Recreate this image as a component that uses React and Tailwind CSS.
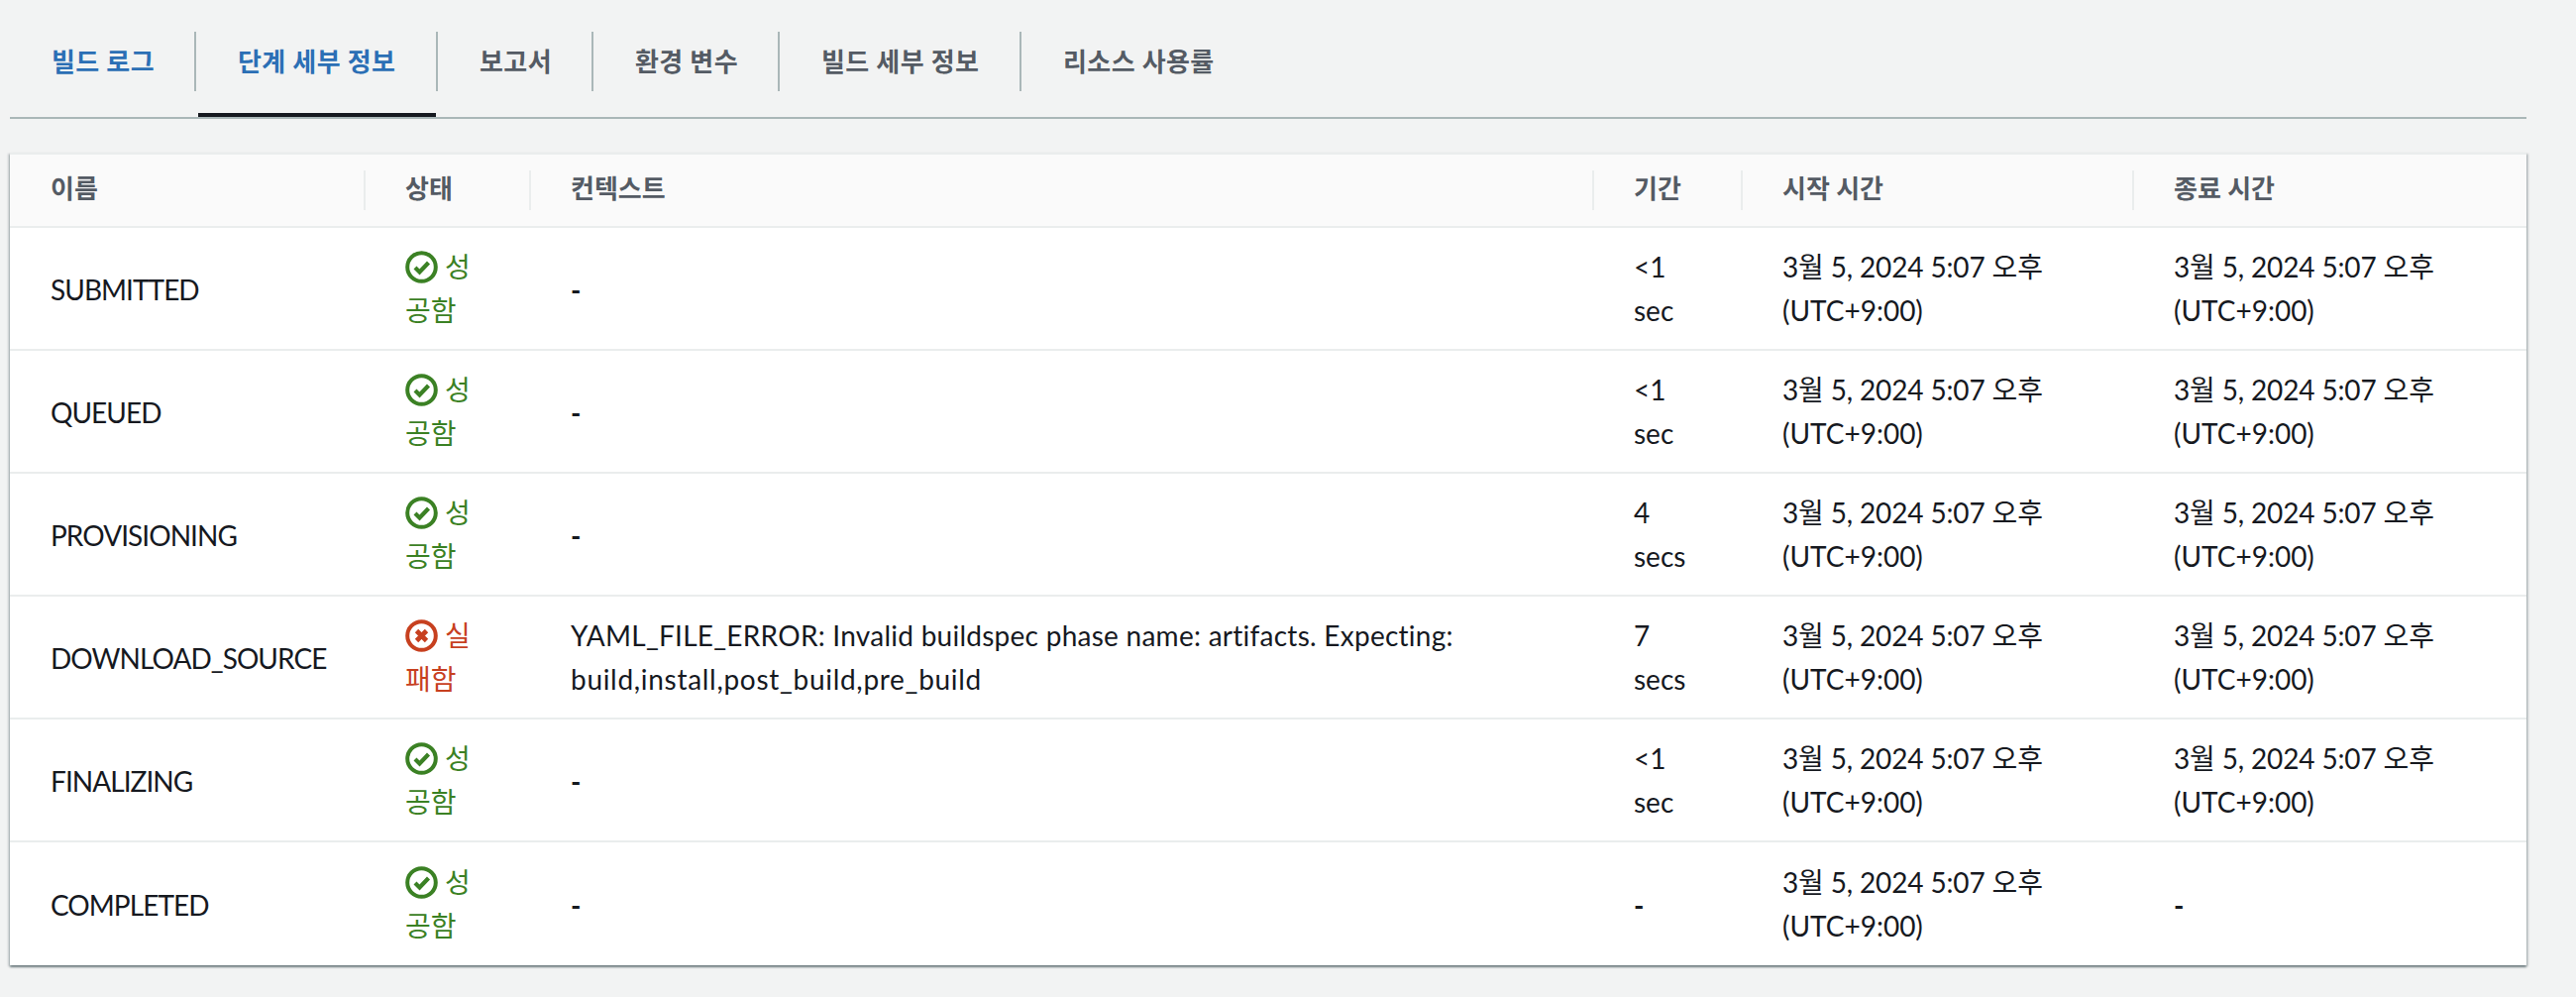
const font = { fontFamily: '"Lato", "Noto Sans CJK KR", sans-serif' };

const tabs = [
  { label: "빌드 로그", w: "w-[188px]", text: "text-[#2b6fb5]", sep: true },
  { label: "단계 세부 정보", w: "w-[244px]", text: "text-[#2b6fb5]", sep: true, active: true },
  { label: "보고서", w: "w-[157px]", text: "text-[#545b64]", sep: true },
  { label: "환경 변수", w: "w-[188px]", text: "text-[#545b64]", sep: true },
  { label: "빌드 세부 정보", w: "w-[244px]", text: "text-[#545b64]", sep: true },
  { label: "리소스 사용률", w: "w-[240px]", text: "text-[#545b64]", sep: false },
];

const when = "3월 5, 2024 5:07 오후";
const rows = [
  { name: "SUBMITTED", ok: true, ctx: ["-"], dur: ["<1", "sec"], end: true },
  { name: "QUEUED", ok: true, ctx: ["-"], dur: ["<1", "sec"], end: true },
  { name: "PROVISIONING", ok: true, ctx: ["-"], dur: ["4", "secs"], end: true },
  {
    name: "DOWNLOAD_SOURCE",
    ok: false,
    ctx: ["YAML_FILE_ERROR: Invalid buildspec phase name: artifacts. Expecting:", "build,install,post_build,pre_build"],
    dur: ["7", "secs"],
    end: true,
  },
  { name: "FINALIZING", ok: true, ctx: ["-"], dur: ["<1", "sec"], end: true },
  { name: "COMPLETED", ok: true, ctx: ["-"], dur: ["-"], end: false },
];

const heads = [
  { label: "이름", cls: "w-[357px]" },
  { label: "상태", cls: "w-[167px]" },
  { label: "컨텍스트", cls: "w-[1073px]" },
  { label: "기간", cls: "w-[150px]" },
  { label: "시작 시간", cls: "w-[395px]" },
  { label: "종료 시간", cls: "w-[398px]" },
];

function StatusIcon({ ok }) {
  const color = ok ? "#3b8124" : "#c7401f";
  return (
    <svg width="33" height="33" viewBox="0 0 33 33" fill="none" className="inline-block align-[-6px] mr-[7px]">
      <circle cx="16.5" cy="16.5" r="14.3" stroke={color} strokeWidth="4" />
      {ok ? (
        <path d="M10 17 L14.5 21.5 L23.5 12" stroke={color} strokeWidth="4.2" />
      ) : (
        <path d="M11.5 11.5 L21.5 21.5 M21.5 11.5 L11.5 21.5" stroke={color} strokeWidth="4.8" />
      )}
    </svg>
  );
}

function Lines({ lines, tracking }) {
  return lines.map((l, i) => (
    <span
      key={i}
      className={`block whitespace-nowrap ${tracking ? tracking[i] : ""} ${l === "-" ? "pt-[2px] font-bold" : ""}`}
    >
      {l}
    </span>
  ));
}

export default function App() {
  return (
    <div className="min-h-[1006px] bg-[#f2f3f3] pl-[10px] pr-[50px] text-[28px] leading-[44px] text-[#16191f]" style={font}>
      <div className="flex h-[120px] border-b-2 border-[#aab7b8]">
        {tabs.map((t) => (
          <div key={t.label} className={`${t.w} pt-[32px]`}>
            <div
              className={`flex h-[60px] items-center pl-[42px] text-[26px] font-bold tracking-[0.4px] whitespace-nowrap ${t.text} ${
                t.sep ? "border-r-2 border-[#aab7b8]" : ""
              }`}
            >
              {t.label}
            </div>
            {t.active && <div className="ml-[2px] mr-[2px] mt-[22px] h-[4px] bg-[#16191f]" />}
          </div>
        ))}
      </div>

      <div className="mt-[34px] border-t-2 border-[#eaeded] bg-white shadow-[0_2px_2px_0_rgba(0,28,36,0.45),2px_1px_2px_0_rgba(0,28,36,0.15),-2px_1px_2px_0_rgba(0,28,36,0.15)]">
        <table className="w-full table-fixed border-separate border-spacing-0">
          <thead>
            <tr>
              {heads.map((h, i) => (
                <th key={h.label} className={`${h.cls} h-[74px] border-b-2 border-[#eaeded] bg-[#fafafa] p-0 text-left font-bold`}>
                  <div
                    className={`flex h-[40px] items-center text-[26px] text-[#545b64] ${
                      i === 0 ? "pl-[41px]" : "border-l-2 border-[#eaeded] pl-[40px]"
                    }`}
                  >
                    <span className="relative -top-[2px]">{h.label}</span>
                  </div>
                </th>
              ))}
            </tr>
          </thead>
          <tbody>
            {rows.map((r, idx) => {
              const last = idx === rows.length - 1;
              const base = `p-0 align-middle h-[124px] ${last ? "" : "border-b-2 border-[#eaeded]"}`;
              const td = `${base} pl-[42px]`;
              return (
                <tr key={r.name}>
                  <td className={`${base} pl-[41px] pt-[2px] tracking-[-0.95px]`}>{r.name}</td>
                  <td className={td}>
                    <span className={`block whitespace-nowrap ${r.ok ? "text-[#3b8124]" : "text-[#c7401f]"}`}>
                      <StatusIcon ok={r.ok} />
                      {r.ok ? "성" : "실"}
                    </span>
                    <span className={`block whitespace-nowrap ${r.ok ? "text-[#3b8124]" : "text-[#c7401f]"}`}>
                      {r.ok ? "공함" : "패함"}
                    </span>
                  </td>
                  <td className={td}>
                    <Lines lines={r.ctx} tracking={["tracking-[0.26px]", "tracking-[0.7px]"]} />
                  </td>
                  <td className={td}>
                    <Lines lines={r.dur} />
                  </td>
                  <td className={td}>
                    <Lines lines={[when, "(UTC+9:00)"]} tracking={["tracking-[-0.15px]", ""]} />
                  </td>
                  <td className={td}>
                    <Lines lines={r.end ? [when, "(UTC+9:00)"] : ["-"]} tracking={["tracking-[-0.15px]", ""]} />
                  </td>
                </tr>
              );
            })}
          </tbody>
        </table>
      </div>
    </div>
  );
}
